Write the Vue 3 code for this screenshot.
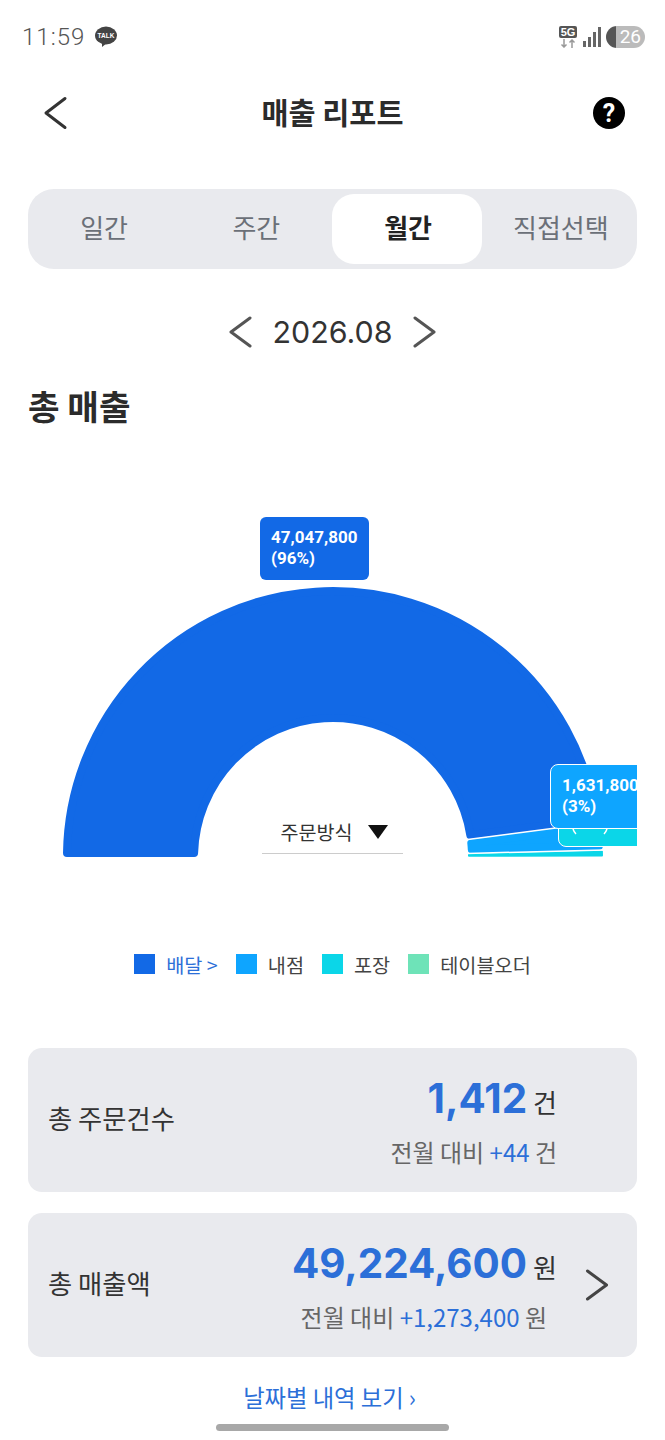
<template>
  <div class="page">
    <div class="status">
      <div class="status-left">
        <span class="clock">11:59</span>
        <svg class="talk" width="24" height="22" viewBox="0 0 24 22">
          <ellipse cx="12" cy="9.5" rx="11" ry="9" fill="#444" />
          <path d="M8 16 L8 21 L13 17 Z" fill="#444" />
          <text x="12" y="12" text-anchor="middle" class="talk-text">TALK</text>
        </svg>
      </div>
      <div class="status-right">
        <div class="net">
          <span class="five">5G</span>
          <svg width="16" height="9" viewBox="0 0 16 9">
            <path d="M4 0 V8 M1.5 5.5 L4 8 L6.5 5.5" fill="none" stroke="#999" stroke-width="1.5" />
            <path d="M12 9 V1 M9.5 3.5 L12 1 L14.5 3.5" fill="none" stroke="#999" stroke-width="1.5" />
          </svg>
        </div>
        <svg width="20" height="22" viewBox="0 0 20 22">
          <rect x="0" y="15" width="3" height="6" fill="#666" />
          <rect x="5" y="11" width="3" height="10" fill="#666" />
          <rect x="10" y="6" width="3" height="15" fill="#666" />
          <rect x="15" y="1" width="3" height="20" fill="#666" />
        </svg>
        <div class="battery"><span>26</span></div>
      </div>
    </div>

    <div class="topbar">
      <svg width="26" height="34" viewBox="0 0 26 34" class="back">
        <path d="M23 2.5 L4 17 L23 31.5" fill="none" stroke="#333" stroke-width="3" stroke-linecap="round" stroke-linejoin="round" />
      </svg>
      <h1>매출 리포트</h1>
      <svg width="32" height="32" viewBox="0 0 32 32">
        <circle cx="16" cy="16" r="16" fill="#000" />
        <text x="16" y="25" text-anchor="middle" class="help">?</text>
      </svg>
    </div>

    <div class="tabs">
      <button v-for="t in tabs" :key="t" class="tab" :class="{ active: t === current }">{{ t }}</button>
    </div>

    <div class="month">
      <svg width="24" height="32" viewBox="0 0 24 32">
        <path d="M22 2 L3 16 L22 30" fill="none" stroke="#555" stroke-width="3" stroke-linecap="round" stroke-linejoin="round" />
      </svg>
      <span>2026.08</span>
      <svg width="24" height="32" viewBox="0 0 24 32">
        <path d="M2 2 L21 16 L2 30" fill="none" stroke="#555" stroke-width="3" stroke-linecap="round" stroke-linejoin="round" />
      </svg>
    </div>

    <h2 class="section">총 매출</h2>

    <div class="chart">
      <svg class="donut" width="609" height="300" viewBox="0 0 609 300">
        <path
          v-for="s in slices"
          :key="s.color"
          :d="s.d"
          :fill="s.color"
          :stroke="s.color"
          :stroke-width="s.round * 2"
          stroke-linejoin="round"
        />
        <path v-for="(d, i) in gaps" :key="i" :d="d" stroke="#fff" stroke-width="1.5" fill="none" />
      </svg>
      <div class="tip tip-blue">47,047,800<br />(96%)</div>
      <div class="tip tip-cyan">
        <svg width="40" height="8" viewBox="0 0 40 8">
          <path d="M3 1 Q4 4 6 6 M34 6 Q36 4 37 1" fill="none" stroke="#fff" stroke-width="1.5" />
        </svg>
      </div>
      <div class="tip tip-sky">1,631,800<br />(3%)</div>
      <div class="select">
        <span>주문방식</span>
        <i class="caret"></i>
      </div>
    </div>

    <div class="legend">
      <div v-for="l in legend" :key="l.name" class="legend-item">
        <i :style="{ background: l.color }"></i>
        <span :class="{ link: l.link }">{{ l.name }}</span>
      </div>
    </div>

    <div class="card">
      <span class="card-title">총 주문건수</span>
      <div class="card-values">
        <div class="big-row"><b>1,412</b><span>건</span></div>
        <div class="sub">전월 대비 <em>+44</em> 건</div>
      </div>
    </div>

    <div class="card second">
      <span class="card-title">총 매출액</span>
      <div class="card-values">
        <div class="big-row"><b>49,224,600</b><span>원</span></div>
        <div class="sub inset">전월 대비 <em>+1,273,400</em> 원</div>
      </div>
      <svg class="chev" width="24" height="34" viewBox="0 0 24 34">
        <path d="M2.5 3 L21.5 17 L2.5 31" fill="none" stroke="#444" stroke-width="3" stroke-linecap="round" stroke-linejoin="round" />
      </svg>
    </div>

    <div class="more">날짜별 내역 보기 ›</div>
    <div class="home"></div>
  </div>
</template>

<script setup>
const tabs = ['일간', '주간', '월간', '직접선택']
const current = '월간'

const legend = [
  { name: '배달 >', color: '#1269e6', link: true },
  { name: '내점', color: '#0ea5ff' },
  { name: '포장', color: '#0bd6e8' },
  { name: '테이블오더', color: '#6ee3b8' }
]

// center of the half donut inside the svg
const cx = 305
const cy = 286
const outer = 270
const inner = 135

function pt(r, deg) {
  const a = (deg * Math.PI) / 180
  return `${(cx + r * Math.cos(a)).toFixed(1)} ${(cy - r * Math.sin(a)).toFixed(1)}`
}

// slice shrunk by `round`, the stroke of the same width gives the rounded corners
function arc(from, to, round) {
  const ro = outer - round
  const ri = inner + round
  const off = r => (Math.asin(round / r) * 180) / Math.PI
  return [
    `M${pt(ro, from - off(ro))}`,
    `A${ro} ${ro} 0 0 1 ${pt(ro, to + off(ro))}`,
    `L${pt(ri, to + off(ri))}`,
    `A${ri} ${ri} 0 0 0 ${pt(ri, from - off(ri))}`,
    'Z'
  ].join(' ')
}

const slices = [
  { color: '#1269e6', round: 4, d: arc(180, 7.4, 4) },
  { color: '#0ea5ff', round: 4, d: arc(7.4, 1.5, 4) },
  { color: '#0bd6e8', round: 1, d: arc(1.4, 0.1, 1) }
]

const gaps = [7.4, 1.5].map(deg => `M${pt(inner - 1, deg)} L${pt(outer + 1, deg)}`)
</script>

<style>
body {
  background: #fff;
}
</style>

<style scoped>
.page {
  width: 665px;
  height: 1440px;
  position: relative;
  overflow: hidden;
  background: #fff;
  font-family: "Noto Sans CJK KR", "Noto Sans", sans-serif;
  color: #333;
}
.status {
  height: 74px;
  display: flex;
  justify-content: space-between;
  align-items: center;
  padding: 0 20px 0 22px;
}
.status-left,
.status-right {
  display: flex;
  align-items: center;
}
.clock {
  font-family: Roboto, sans-serif;
  font-size: 24px;
  font-weight: 300;
  color: #555;
  letter-spacing: 1px;
  margin-right: 9px;
}
.talk-text {
  font: 700 6.5px "Liberation Sans", sans-serif;
  fill: #fff;
}
.net {
  display: flex;
  flex-direction: column;
  align-items: center;
  width: 20px;
  margin-right: 5px;
}
.five {
  background: #555;
  color: #fff;
  font: 700 11px/12px "Liberation Sans", sans-serif;
  padding: 0 2px;
  border-radius: 2px;
  margin-bottom: 1px;
}
.battery {
  width: 39px;
  height: 22px;
  margin-left: 3px;
  border-radius: 11px;
  background: linear-gradient(90deg, #555 0 26%, #bbb 26%);
  color: #fff;
  font: 400 19px/22px Roboto, sans-serif;
  text-align: right;
  padding-right: 4px;
  box-sizing: border-box;
}
.topbar {
  height: 78px;
  display: flex;
  align-items: center;
  justify-content: space-between;
  padding: 0 40px 0 42px;
}
.topbar h1 {
  margin: 0 0 4px 4px;
  font-size: 29.4px;
  font-weight: 700;
  color: #2b2b2b;
}
.help {
  font: 700 25px Roboto, sans-serif;
  fill: #fff;
}
.tabs {
  margin: 37px 28px 0;
  height: 80px;
  box-sizing: border-box;
  padding: 5px 0;
  border-radius: 26px;
  background: #e9eaee;
  display: grid;
  grid-template-columns: repeat(4, 1fr);
}
.tab {
  border: 0;
  background: none;
  border-radius: 22px;
  font-family: inherit;
  font-size: 26px;
  font-weight: 400;
  color: #6b7078;
  padding: 0 0 6px;
}
.tab.active {
  background: #fff;
  color: #222;
  font-weight: 700;
  margin: 0 3px 0 -1px;
  padding-left: 3px;
}
.month {
  margin-top: 46px;
  display: flex;
  justify-content: center;
  align-items: center;
  gap: 20px;
  height: 34px;
}
.month span {
  font-family: Inter, sans-serif;
  font-size: 30.4px;
  color: #333;
}
.section {
  margin: 33px 28px 0;
  font-size: 34.3px;
  font-weight: 700;
  line-height: 46px;
  color: #2b2b2b;
}
.chart {
  position: relative;
  margin: 0 28px;
  height: 519px;
  overflow: hidden;
}
.donut {
  position: absolute;
  left: 0;
  top: 143px;
}
.tip {
  position: absolute;
  box-sizing: border-box;
  border-radius: 6px;
  color: #fff;
  font: 700 17px/21px Roboto, sans-serif;
  padding: 10px 11px;
  white-space: nowrap;
}
.tip-blue {
  left: 232px;
  top: 89px;
  width: 109px;
  height: 63px;
  background: #1269e6;
}
.tip-sky {
  left: 522px;
  top: 336px;
  width: 125px;
  height: 65px;
  background: #0ea5ff;
  border: 1.5px solid #fff;
  border-radius: 8px;
}
.tip-cyan {
  left: 530px;
  top: 392px;
  width: 120px;
  height: 27px;
  background: #0bd6e8;
  border: 1.5px solid #fff;
  border-radius: 8px;
  padding: 7px 0 0 11px;
  line-height: 0;
}
.select {
  position: absolute;
  left: 234px;
  top: 382px;
  width: 141px;
  height: 44px;
  box-sizing: border-box;
  border-bottom: 1px solid #ccc;
  display: flex;
  justify-content: center;
  align-items: center;
  gap: 15px;
  font-size: 19.6px;
  color: #333;
  padding-left: 3px;
}
.caret {
  width: 0;
  height: 0;
  border-left: 10px solid transparent;
  border-right: 10px solid transparent;
  border-top: 14px solid #111;
}
.legend {
  display: flex;
  justify-content: center;
  gap: 18px;
  height: 34px;
  align-items: center;
  font-size: 19.7px;
  color: #444;
}
.legend-item {
  display: flex;
  align-items: center;
  gap: 11px;
}
.legend-item i {
  width: 21px;
  height: 20px;
}
.link {
  color: #2c6fd8;
}
.card {
  margin: 67px 28px 0;
  height: 144px;
  border-radius: 14px;
  background: #e9eaee;
  display: flex;
  align-items: center;
  padding: 0 20px;
  position: relative;
}
.card.second {
  margin-top: 21px;
}
.card-title {
  font-size: 26.3px;
  color: #333;
  padding-bottom: 6px;
}
.card-values {
  margin-left: auto;
  margin-right: 60px;
  text-align: right;
}
.big-row {
  display: flex;
  justify-content: flex-end;
  align-items: baseline;
  gap: 6px;
  font-size: 26px;
  line-height: 60px;
}
.big-row b {
  font-family: Inter, sans-serif;
  font-size: 40.4px;
  font-weight: 700;
  color: #2c6fd8;
}
.sub {
  font-size: 24px;
  line-height: 40px;
  color: #666;
}
.sub.inset {
  padding-right: 10px;
}
.sub em {
  font-style: normal;
  color: #2c6fd8;
}
.chev {
  position: absolute;
  right: 28px;
  top: 55px;
}
.more {
  margin-top: 23px;
  padding-right: 6px;
  text-align: center;
  font-size: 23.3px;
  color: #2c6fd8;
}
.home {
  position: absolute;
  left: 216px;
  top: 1424px;
  width: 233px;
  height: 7px;
  border-radius: 4px;
  background: #a8a8a8;
}
</style>
